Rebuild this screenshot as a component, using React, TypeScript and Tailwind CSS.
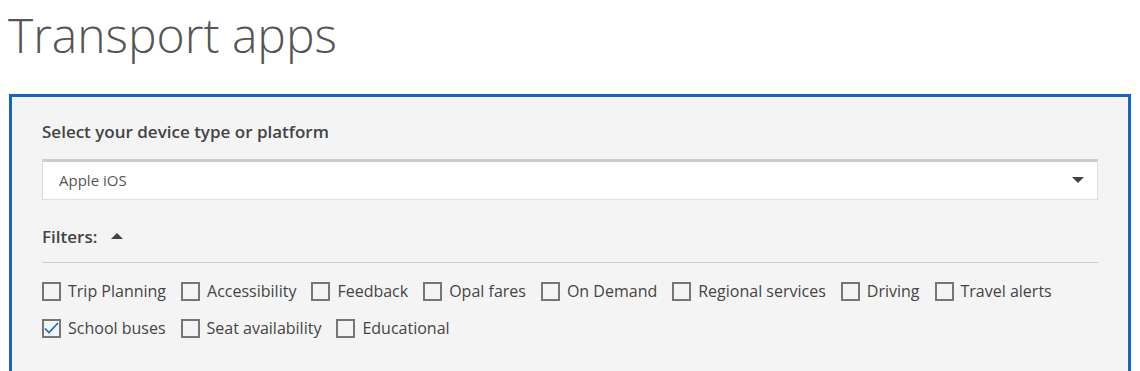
// App.tsx — Transport apps filter panel

const rowOne = [
  'Trip Planning',
  'Accessibility',
  'Feedback',
  'Opal fares',
  'On Demand',
  'Regional services',
  'Driving',
  'Travel alerts',
]

const rowTwo = ['School buses', 'Seat availability', 'Educational']

function Checkbox({ label, checked = false }: { label: string; checked?: boolean }) {
  return (
    <label className="flex items-center gap-[7px] mr-[15px]">
      <span className="flex h-[19px] w-[19px] flex-shrink-0 items-center justify-center border-2 border-[#767676] bg-[#f4f4f4]">
        {checked && (
          <svg width="15" height="12" viewBox="0 0 15 12" fill="none">
            <path d="M1 6.5 L5 10.5 L14 1" stroke="#1565c0" strokeWidth="1.6" />
          </svg>
        )}
      </span>
      <span className="text-[16px] text-[#444]">{label}</span>
    </label>
  )
}

export default function App() {
  return (
    <div className="h-[371px] overflow-hidden bg-white font-['Open_Sans',sans-serif]">
      <h1 className="pl-[8px] pt-[4px] text-[48px] font-light leading-[62px] text-[#555]">
        Transport apps
      </h1>

      {/* ── Panel ── */}
      <div className="ml-[9px] mt-[28px] w-[1122px] border-[3px] border-[#1565c0] bg-[#f4f4f4] px-[30px] pt-[22px] pb-10">
        <h2 className="text-[17px] font-semibold text-[#444]">Select your device type or platform</h2>

        <div className="mt-[14px] flex h-[41px] items-center justify-between border border-t-[3px] border-[#ddd] border-t-[#ccc] bg-white pl-[16px] pr-[13px]">
          <span className="text-[15px] text-[#555]">Apple iOS</span>
          <span className="h-0 w-0 border-x-[6px] border-t-[6px] border-x-transparent border-t-[#444]" />
        </div>

        <div className="mt-[24px] flex items-center gap-[14px]">
          <span className="text-[17px] font-semibold text-[#444]">Filters:</span>
          <span className="h-0 w-0 border-x-[6px] border-b-[6px] border-x-transparent border-b-[#444]" />
        </div>

        <div className="mt-[13px] border-t border-[#ccc]" />

        <div className="mt-[16px] flex flex-wrap gap-y-[13px]">
          <div className="flex w-full">
            {rowOne.map(l => (
              <Checkbox key={l} label={l} />
            ))}
          </div>
          <div className="flex w-full">
            {rowTwo.map((l, i) => (
              <Checkbox key={l} label={l} checked={i === 0} />
            ))}
          </div>
        </div>
      </div>
    </div>
  )
}
